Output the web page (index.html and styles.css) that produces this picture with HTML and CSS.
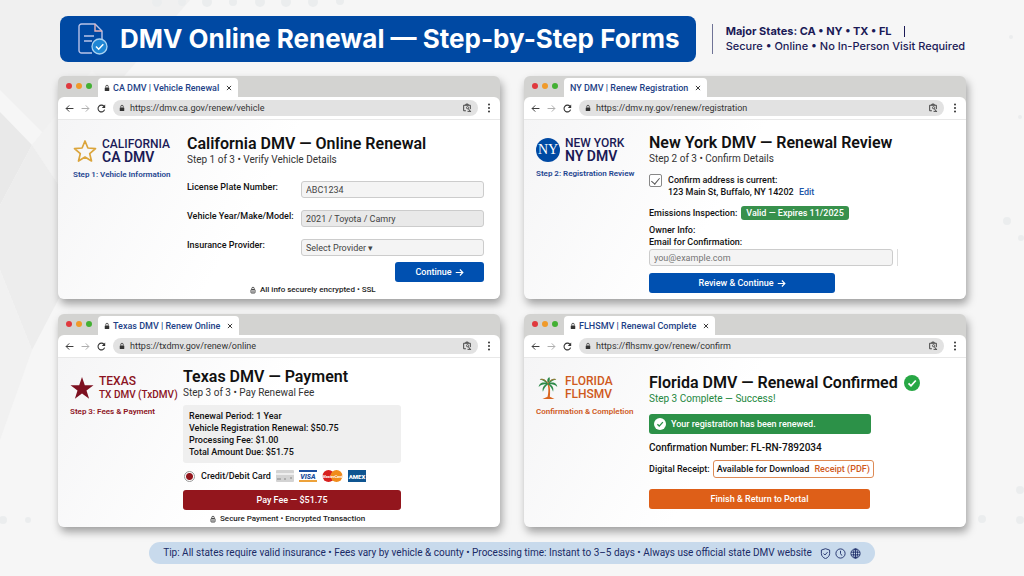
FILE: index.html
```html
<!DOCTYPE html>
<html lang="en">
<head>
    <meta charset="UTF-8">
    <meta name="viewport" content="width=device-width, initial-scale=1.0">
    <title>DMV Online Renewal</title>
    <link rel="stylesheet" href="styles.css">
</head>
<body>
    <!-- Shared icons -->
    <svg class="sprite" aria-hidden="true">
        <symbol id="lock" viewBox="0 0 12 14">
            <path d="M3.5 6V4a2.5 2.5 0 0 1 5 0v2" fill="none" stroke="currentColor" stroke-width="1.6"/>
            <rect x="1.5" y="6" width="9" height="7" rx="1" fill="currentColor"/>
        </symbol>
        <symbol id="lock-open" viewBox="0 0 12 14">
            <path d="M3.5 6V4a2.5 2.5 0 0 1 5 0v2" fill="none" stroke="currentColor" stroke-width="1.6"/>
            <rect x="2" y="6" width="8" height="7" rx="1" fill="none" stroke="currentColor" stroke-width="1.8"/>
            <path d="M4 8.5h4M4 10.5h4" stroke="currentColor"/>
        </symbol>
        <symbol id="back" viewBox="0 0 16 16">
            <path d="M15 8H2M7.5 2.500L2 8l5.500 5.500" fill="none" stroke="currentColor" stroke-width="1.7"/>
        </symbol>
        <symbol id="forward" viewBox="0 0 16 16">
            <path d="M1 8h13M8.500 2.500L14 8l-5.500 5.500" fill="none" stroke="currentColor" stroke-width="1.7"/>
        </symbol>
        <symbol id="reload" viewBox="0 0 16 16">
            <path d="M13.500 10A6 6 0 1 1 12.500 4.200" fill="none" stroke="currentColor" stroke-width="1.9"/>
            <path d="M14.500 1v6h-6z" fill="currentColor"/>
        </symbol>
        <symbol id="lens" viewBox="0 0 18 18">
            <path d="M7 14H3V4h12v7M7 4V2h4v2" fill="none" stroke="currentColor" stroke-width="1.6"/>
            <circle cx="10" cy="8.500" r="2" fill="none" stroke="currentColor" stroke-width="1.3"/>
            <path d="M11 10l5 6M10 15h5" stroke="currentColor" stroke-width="1.6"/>
        </symbol>
        <symbol id="dots" viewBox="0 0 4 14">
            <circle cx="2" cy="2" r="1.4" fill="currentColor"/>
            <circle cx="2" cy="7" r="1.4" fill="currentColor"/>
            <circle cx="2" cy="12" r="1.4" fill="currentColor"/>
        </symbol>
        <symbol id="close" viewBox="0 0 10 10">
            <path d="M1.500 1.500l7 7M8.500 1.500l-7 7" stroke="currentColor" stroke-width="1.6"/>
        </symbol>
        <symbol id="arrow" viewBox="0 0 12 12">
            <path d="M1 6h9.500M6.500 2l4 4-4 4" fill="none" stroke="currentColor" stroke-width="1.5"/>
        </symbol>
    </svg>

    <svg class="backdrop" viewBox="0 0 1024 576" preserveAspectRatio="none" aria-hidden="true">
        <path d="M0 0h190L60 150 0 90z" fill="#f0f0f0"/>
        <path d="M0 112l32 33L0 205z" fill="#e9e9e9"/>
        <path d="M32 145l60-75 60 75-60 90z" fill="#f2f2f2"/>
        <path d="M0 205l32-60 60 90-60 115L0 270z" fill="#ededed"/>
        <path d="M0 270l32 80L0 440z" fill="#f1f1f1"/>
        <g fill="#ebedee">
            <circle cx="157" cy="2" r="5"/><circle cx="182" cy="2" r="4"/><circle cx="207" cy="2" r="5"/>
            <circle cx="233" cy="2" r="4"/><circle cx="260" cy="2" r="5"/><circle cx="286" cy="2" r="5"/>
            <circle cx="313" cy="2" r="5"/><circle cx="340" cy="1" r="4"/>
            <circle cx="3" cy="520" r="4"/><circle cx="28" cy="520" r="3"/>
            <circle cx="1011" cy="37" r="2"/><circle cx="1020" cy="117" r="2"/><circle cx="1007" cy="221" r="4"/>
            <circle cx="1021" cy="238" r="3"/><circle cx="982" cy="519" r="4"/><circle cx="1020" cy="490" r="4"/>
            <circle cx="1020" cy="520" r="4"/>
        </g>
    </svg>

    <div class="page">
        <header class="header">
            <div class="banner">
                <svg class="banner-icon" viewBox="0 0 30 32" aria-hidden="true">
                    <path d="M14 30H3.500A2.500 2.500 0 0 1 1 27.500v-24A2.500 2.500 0 0 1 3.500 1H17l7 7v8" fill="none" stroke="#b9c3e8" stroke-width="1.4"/>
                    <path d="M17 1v7h7" fill="none" stroke="#e8b4b8" stroke-width="1.4"/>
                    <path d="M6 13h10M6 18h8" stroke="#b9c3e8" stroke-width="1.4"/>
                    <circle cx="21.500" cy="23.500" r="7.500" fill="#1f86d4" stroke="#a9d3f2" stroke-width="1.3"/>
                    <path d="M18 23.500l2.700 2.700 4.600-5" fill="none" stroke="#fff" stroke-width="1.500"/>
                </svg>
                <h1>DMV Online Renewal — Step-by-Step Forms</h1>
            </div>
            <div class="header-info">
                <p><strong>Major States: CA • NY • TX • FL</strong><span class="bar"></span></p>
                <p>Secure • Online • No In-Person Visit Required</p>
            </div>
        </header>

        <main class="windows">
            <section class="window window-ca">
                <div class="tabs">
                    <span class="lights"><i class="red"></i><i class="amber"></i><i class="green"></i></span>
                    <div class="tab"><svg class="lock"><use href="#lock"/></svg>CA DMV | Vehicle Renewal<svg class="close"><use href="#close"/></svg></div>
                </div>
                <div class="toolbar">
                    <svg class="nav"><use href="#back"/></svg>
                    <svg class="nav off"><use href="#forward"/></svg>
                    <svg class="nav"><use href="#reload"/></svg>
                    <div class="address"><svg class="lock"><use href="#lock"/></svg><span>https://dmv.ca.gov/renew/vehicle</span><svg class="lens"><use href="#lens"/></svg></div>
                    <svg class="menu"><use href="#dots"/></svg>
                </div>
                <div class="content">
                    <aside class="agency navy">
                        <div class="agency-name">
                            <svg class="logo" viewBox="0 0 24 24" aria-hidden="true"><path d="M12 2l2.900 7 7.600.6-5.800 5 1.800 7.400L12 18l-6.500 4 1.800-7.400-5.800-5L9.100 9z" fill="none" stroke="#dba53c" stroke-width="1.700" stroke-linejoin="round"/></svg>
                            <p><span>CALIFORNIA</span><b>CA DMV</b></p>
                        </div>
                        <p class="agency-step">Step 1: Vehicle Information</p>
                    </aside>
                    <div class="form">
                        <h2>California DMV — Online Renewal</h2>
                        <p class="sub">Step 1 of 3 • Verify Vehicle Details</p>
                        <div class="fields">
                            <label for="plate">License Plate Number:</label>
                            <input class="field" type="text" id="plate" value="ABC1234">
                            <label for="model">Vehicle Year/Make/Model:</label>
                            <input class="field filled" type="text" id="model" value="2021 / Toyota / Camry">
                            <label for="provider">Insurance Provider:</label>
                            <select class="field" id="provider"><option>Select Provider ▾</option></select>
                        </div>
                        <button class="button blue continue">Continue <svg class="arrow"><use href="#arrow"/></svg></button>
                        <p class="note"><svg class="lock"><use href="#lock-open"/></svg>All info securely encrypted • SSL</p>
                    </div>
                </div>
            </section>

            <section class="window window-ny">
                <div class="tabs">
                    <span class="lights"><i class="red"></i><i class="amber"></i><i class="green"></i></span>
                    <div class="tab">NY DMV | Renew Registration<svg class="close"><use href="#close"/></svg></div>
                </div>
                <div class="toolbar">
                    <svg class="nav"><use href="#back"/></svg>
                    <svg class="nav off"><use href="#forward"/></svg>
                    <svg class="nav"><use href="#reload"/></svg>
                    <div class="address"><svg class="lock"><use href="#lock"/></svg><span>https://dmv.ny.gov/renew/registration</span><svg class="lens"><use href="#lens"/></svg></div>
                    <svg class="menu"><use href="#dots"/></svg>
                </div>
                <div class="content">
                    <aside class="agency navy">
                        <div class="agency-name">
                            <span class="logo seal">NY</span>
                            <p><span>NEW YORK</span><b>NY DMV</b></p>
                        </div>
                        <p class="agency-step">Step 2: Registration Review</p>
                    </aside>
                    <div class="form">
                        <h2>New York DMV — Renewal Review</h2>
                        <p class="sub">Step 2 of 3 • Confirm Details</p>
                        <div class="confirm">
                            <input class="check" type="checkbox" id="address" checked>
                            <div>
                                <label for="address">Confirm address is current:</label>
                                <p>123 Main St, Buffalo, NY 14202 <a href="#">Edit</a></p>
                            </div>
                        </div>
                        <p class="inspection">Emissions Inspection: <span class="badge">Valid — Expires 11/2025</span></p>
                        <p class="owner">Owner Info:</p>
                        <label class="owner" for="email">Email for Confirmation:</label>
                        <div class="email">
                            <input class="field" type="email" id="email" placeholder="you@example.com">
                        </div>
                        <button class="button blue">Review &amp; Continue <svg class="arrow"><use href="#arrow"/></svg></button>
                    </div>
                </div>
            </section>

            <section class="window window-tx">
                <div class="tabs">
                    <span class="lights"><i class="red"></i><i class="amber"></i><i class="green"></i></span>
                    <div class="tab"><svg class="lock"><use href="#lock"/></svg>Texas DMV | Renew Online<svg class="close"><use href="#close"/></svg></div>
                </div>
                <div class="toolbar">
                    <svg class="nav"><use href="#back"/></svg>
                    <svg class="nav off"><use href="#forward"/></svg>
                    <svg class="nav"><use href="#reload"/></svg>
                    <div class="address"><svg class="lock"><use href="#lock"/></svg><span>https://txdmv.gov/renew/online</span><svg class="lens"><use href="#lens"/></svg></div>
                    <svg class="menu"><use href="#dots"/></svg>
                </div>
                <div class="content">
                    <aside class="agency maroon">
                        <div class="agency-name">
                            <svg class="logo" viewBox="0 0 24 24" aria-hidden="true"><path d="M12 1l2.800 8.200h8.700l-7 5.200 2.600 8.300L12 17.600l-7.100 5.100 2.600-8.300-7-5.200h8.700z" fill="#7d1020"/></svg>
                            <p><span>TEXAS</span><small>TX DMV (TxDMV)</small></p>
                        </div>
                        <p class="agency-step">Step 3: Fees &amp; Payment</p>
                    </aside>
                    <div class="form">
                        <h2>Texas DMV — Payment</h2>
                        <p class="sub">Step 3 of 3 • Pay Renewal Fee</p>
                        <ul class="fees">
                            <li>Renewal Period: 1 Year</li>
                            <li>Vehicle Registration Renewal: $50.75</li>
                            <li>Processing Fee: $1.00</li>
                            <li>Total Amount Due: $51.75</li>
                        </ul>
                        <div class="pay-method">
                            <input class="radio" type="radio" name="method" id="card" checked>
                            <label for="card">Credit/Debit Card</label>
                            <svg viewBox="0 0 18 12" aria-hidden="true"><rect width="18" height="12" rx="1" fill="#d3d3d3"/><path d="M0 4h18" stroke="#eee" stroke-width="2"/><path d="M1 9h4M8 9h2M15 7v2" stroke="#888"/></svg>
                            <svg viewBox="0 0 18 12" aria-hidden="true"><rect width="18" height="12" fill="#fff"/><rect width="18" height="2" fill="#1c4fa0"/><rect y="10" width="18" height="2" fill="#eda23a"/><text x="9" y="8.500" font-size="7" font-style="italic" font-weight="900" fill="#1c4fa0" text-anchor="middle">VISA</text></svg>
                            <svg class="wide" viewBox="0 0 21 12" aria-hidden="true"><circle cx="6.500" cy="6" r="6" fill="#d8201f"/><circle cx="14.500" cy="6" r="6" fill="#f08c1b"/><text x="10.500" y="7.500" font-size="4" font-style="italic" font-weight="700" fill="#fff" text-anchor="middle">MasterCard</text></svg>
                            <svg viewBox="0 0 18 12" aria-hidden="true"><rect width="18" height="12" fill="#0f5591"/><text x="9" y="8.500" font-size="6" font-weight="900" fill="#fff" text-anchor="middle">AMEX</text></svg>
                        </div>
                        <button class="button red">Pay Fee — $51.75</button>
                        <p class="note"><svg class="lock"><use href="#lock-open"/></svg>Secure Payment • Encrypted Transaction</p>
                    </div>
                </div>
            </section>

            <section class="window window-fl">
                <div class="tabs">
                    <span class="lights"><i class="red"></i><i class="amber"></i><i class="green"></i></span>
                    <div class="tab"><svg class="lock"><use href="#lock"/></svg>FLHSMV | Renewal Complete<svg class="close"><use href="#close"/></svg></div>
                </div>
                <div class="toolbar">
                    <svg class="nav"><use href="#back"/></svg>
                    <svg class="nav off"><use href="#forward"/></svg>
                    <svg class="nav"><use href="#reload"/></svg>
                    <div class="address"><svg class="lock"><use href="#lock"/></svg><span>https://flhsmv.gov/renew/confirm</span><svg class="lens"><use href="#lens"/></svg></div>
                    <svg class="menu"><use href="#dots"/></svg>
                </div>
                <div class="content">
                    <aside class="agency rust">
                        <div class="agency-name">
                            <svg class="logo" viewBox="0 0 24 26" aria-hidden="true">
                                <path d="M11 8c2 4 1.500 10 .5 14.500L6 25h13l-5-2.500c.5-5 .5-10-1-14.500z" fill="#d9651f"/>
                                <path d="M12 8C9 3 5 2 3 4c3 0 5 1.500 7 3.500C6 6 2 8 2 12c2-2.500 5-3.500 8-3-3 1.500-4.500 4.500-3.500 8 1-3.500 3-6 5.500-8 2.500 2 4.500 4.500 5.500 8 1-3.500-.5-6.500-3.500-8 3-.5 6 .5 8 3 0-4-4-6-8-4.500C16 5.500 18 4 21 4c-2-2-6-1-9 4z" fill="#2d8a4a"/>
                                <path d="M12 8c-1.500-3-1-5.500 1.500-7 1 2.500.5 5-1.500 7z" fill="#2d8a4a"/>
                                <path d="M4 3.500c4 0 6 1.500 8 4.500M20 3.500c-4 0-6 1.500-8 4.500" fill="none" stroke="#c9702c" stroke-width=".8"/>
                            </svg>
                            <p><span>FLORIDA</span><span>FLHSMV</span></p>
                        </div>
                        <p class="agency-step">Confirmation &amp; Completion</p>
                    </aside>
                    <div class="form">
                        <h2>Florida DMV — Renewal Confirmed <svg class="done" viewBox="0 0 16 16"><circle cx="8" cy="8" r="8" fill="#27a745"/><path d="M4.500 8.300l2.500 2.500 4.800-5.300" fill="none" stroke="#fff" stroke-width="1.800"/></svg></h2>
                        <p class="sub success">Step 3 Complete — Success!</p>
                        <p class="alert"><svg viewBox="0 0 16 16"><circle cx="8" cy="8" r="8" fill="#fff"/><path d="M4.500 8.300l2.500 2.500 4.800-5.300" fill="none" stroke="#2c9148" stroke-width="1.800"/></svg>Your registration has been renewed.</p>
                        <p class="number">Confirmation Number: FL-RN-7892034</p>
                        <div class="receipt">Digital Receipt: <span class="download">Available for Download <a href="#">Receipt (PDF)</a></span></div>
                        <button class="button orange">Finish &amp; Return to Portal</button>
                    </div>
                </div>
            </section>
        </main>

        <footer class="tip">
            <p>Tip: All states require valid insurance • Fees vary by vehicle &amp; county • Processing time: Instant to 3–5 days • Always use official state DMV website</p>
            <svg viewBox="0 0 16 16" aria-hidden="true"><path d="M8 1l6 2v5c0 3.500-2.500 6-6 7.500C4.500 14 2 11.500 2 8V3z"/><path d="M5 8l2.200 2.200L11 6"/></svg>
            <svg viewBox="0 0 16 16" aria-hidden="true"><circle cx="8" cy="8" r="6.700"/><path d="M8 4v4l2 3"/></svg>
            <svg viewBox="0 0 16 16" aria-hidden="true"><circle cx="8" cy="8" r="6.700"/><ellipse cx="8" cy="8" rx="3" ry="6.700"/><path d="M1.500 6h13M1.500 10h13M8 1.500v13"/></svg>
        </footer>
    </div>
</body>
</html>
```

FILE: styles.css
```css
* {
    box-sizing: border-box;
}

body {
    margin: 0;
    min-height: 100vh;
    font-family: Roboto, "Liberation Sans", sans-serif;
    font-size: 10px;
    line-height: 12px;
    color: #111;
    background-color: #f6f6f6;
}

h1,
h2,
p,
ul {
    margin: 0;
    padding: 0;
}

svg {
    display: block;
    flex: none;
}

a {
    text-decoration: none;
}

.sprite {
    position: absolute;
    width: 0;
    height: 0;
}

.backdrop {
    position: absolute;
    top: 0;
    left: 0;
    z-index: -1;
    width: 100%;
    height: 100%;
}

.page {
    padding: 16px 58px 12px;
}

/* Header */
.header {
    display: flex;
    align-items: center;
    gap: 16px;
    padding-left: 2px;
    margin-bottom: 14px;
}

.banner {
    display: flex;
    align-items: center;
    gap: 12px;
    height: 46px;
    padding: 0 16px 0 18px;
    border-radius: 8px;
    background-color: #0049a3;
    color: #fff;
}

.banner-icon {
    width: 30px;
    height: 32px;
}

h1 {
    font-family: Inter, sans-serif;
    font-size: 26px;
    line-height: 32px;
    font-weight: 700;
    white-space: nowrap;
}

.header-info {
    padding-left: 13px;
    border-left: 1px solid #6f7396;
    font-family: Inter, sans-serif;
    font-size: 11px;
    line-height: 15px;
    font-weight: 500;
    color: #1b1a56;
    white-space: nowrap;
}

.header-info p {
    display: flex;
    align-items: center;
}

.bar {
    width: 1px;
    height: 11px;
    margin-left: 12px;
    background-color: #1b1a56;
}

/* Browser windows */
.windows {
    display: grid;
    grid-template-columns: 1fr 1fr;
    gap: 15px 24px;
}

.window {
    display: flex;
    flex-direction: column;
    border-radius: 6px;
    background-color: #d3d3d1;
    box-shadow: 2px 5px 8px rgba(0, 0, 0, 0.35);
}

.tabs {
    display: flex;
    align-items: flex-end;
    gap: 6px;
    height: 21px;
    padding-left: 8px;
}

.lights {
    display: flex;
    gap: 4px;
    padding-bottom: 8px;
}

.lights i {
    width: 6px;
    height: 6px;
    border-radius: 50%;
}

.red {
    background-color: #e0393e;
}

.amber {
    background-color: #f09a2a;
}

.green {
    background-color: #43b033;
}

.tab {
    display: flex;
    align-items: center;
    gap: 3px;
    height: 19px;
    padding: 0 6px;
    border-radius: 4px 4px 0 0;
    background-color: #fff;
    font-size: 9px;
    font-weight: 500;
    color: #1d3f86;
}

.lock {
    width: 6px;
    height: 8px;
    color: #333;
}

.close {
    width: 6px;
    height: 6px;
    margin-left: 4px;
    color: #333;
}

.toolbar {
    display: flex;
    align-items: center;
    height: 23px;
    padding: 0 9px 0 7px;
    border-bottom: 1px solid #e8e8e8;
    border-radius: 6px 6px 0 0;
    background-color: #fff;
    color: #333;
}

.nav {
    width: 9px;
    height: 9px;
    margin-right: 7px;
}

.nav.off {
    color: #aaa;
}

.address {
    display: flex;
    flex: 1;
    align-items: center;
    gap: 5px;
    height: 16px;
    padding: 0 6px;
    border-radius: 8px;
    background-color: #e2e2e2;
}

.address span {
    flex: 1;
    font-size: 9px;
}

.lens {
    width: 10px;
    height: 10px;
}

.menu {
    width: 4px;
    height: 10px;
    margin-left: 9px;
}

/* Window content */
.content {
    display: grid;
    flex: 1;
    grid-template-columns: 113px 1fr;
    padding: 14px 16px 0 12px;
    border-radius: 0 0 6px 6px;
    background: linear-gradient(120deg, #f5f5f6 0%, #fff 45%);
}

.agency {
    padding-top: 3px;
}

.agency-name {
    display: flex;
    align-items: center;
    gap: 5px;
    font-size: 12px;
    font-weight: 500;
    line-height: 13px;
    white-space: nowrap;
}

.agency-name span,
.agency-name b,
.agency-name small {
    display: block;
}

.agency-name b {
    font-size: 14px;
    font-weight: 600;
}

.agency-name small {
    font-size: 10px;
}

.agency-name .logo {
    width: 24px;
    height: 24px;
}

.agency-name .seal {
    border-radius: 50%;
    background-color: #0049a3;
    color: #fff;
    font-family: "Liberation Serif", serif;
    font-size: 14px;
    line-height: 24px;
    text-align: center;
}

.agency-step {
    margin-top: 5px;
    font-size: 8px;
    font-weight: 600;
    white-space: nowrap;
}

.navy {
    color: #1b1a56;
}

.navy .agency-step {
    color: #1d4590;
}

.maroon {
    color: #8c1322;
}

.rust {
    color: #cf5a1c;
}

.form {
    font-weight: 500;
}

h2 {
    display: flex;
    align-items: center;
    gap: 6px;
    font-size: 16px;
    line-height: 18px;
    font-weight: 600;
    white-space: nowrap;
}

.sub {
    font-size: 10px;
    line-height: 14px;
    font-weight: 400;
    color: #333;
}

.success {
    color: #23873d;
}

.field {
    width: 100%;
    height: 17px;
    padding: 0 4px;
    border: 1px solid #ccc;
    border-radius: 3px;
    background-color: #f4f4f4;
    font-family: inherit;
    font-size: 9px;
    color: #444;
    appearance: none;
}

.filled {
    background-color: #e9e9e9;
}

.button {
    display: flex;
    align-items: center;
    justify-content: center;
    gap: 3px;
    height: 20px;
    padding: 0;
    border: none;
    border-radius: 3px;
    font-family: inherit;
    font-size: 9px;
    font-weight: 500;
    color: #fff;
    cursor: pointer;
}

.button.blue {
    background-color: #0050b0;
}

.button.red {
    background-color: #93161d;
}

.button.orange {
    background-color: #de5f18;
}

.arrow {
    width: 9px;
    height: 9px;
}

.note {
    display: flex;
    align-items: center;
    gap: 4px;
    font-size: 8px;
    font-weight: 500;
    color: #222;
}

/* California */
.window-ca .content {
    grid-template-columns: 114px 1fr;
    padding: 15px 16px 3px 15px;
}

.fields {
    display: grid;
    grid-template-columns: 114px 1fr;
    gap: 12px 0;
    margin-top: 14px;
    font-size: 9px;
}

.continue {
    width: 89px;
    margin: 6px 0 2px auto;
}

.window-ca .note {
    padding-left: 63px;
}

/* New York */
.confirm {
    display: flex;
    gap: 6px;
    margin-top: 8px;
}

.check {
    width: 13px;
    height: 13px;
    margin: 0;
    border: 1px solid #888;
    border-radius: 2px;
    background-color: #fff;
    appearance: none;
}

.check:checked::after {
    content: "";
    display: block;
    width: 4px;
    height: 7px;
    margin: 1px auto;
    border: solid #555;
    border-width: 0 1px 1px 0;
    transform: rotate(40deg);
}

.window-ny .form {
    font-size: 9px;
}

.confirm a {
    margin-left: 3px;
    color: #1d56a8;
}

.inspection {
    display: flex;
    align-items: center;
    gap: 4px;
    margin: 8px 0 4px;
}

.badge {
    padding: 1px 5px;
    border-radius: 3px;
    background-color: #38914c;
    color: #fff;
}

.owner {
    display: block;
}

.email {
    width: 249px;
    padding-right: 4px;
    border-right: 1px solid #ddd;
    margin: 1px 0 7px;
}

.window-ny .button {
    width: 186px;
}

/* Texas */
.window-tx .content {
    padding: 10px 16px 2px 12px;
}

.window-tx .agency {
    padding-top: 7px;
}

.fees {
    width: 218px;
    margin: 5px 0 7px;
    padding: 5px 6px;
    border-radius: 3px;
    background-color: #efefef;
    font-size: 9px;
    list-style: none;
}

.pay-method {
    display: flex;
    align-items: center;
    gap: 5px;
    margin-bottom: 8px;
    font-size: 9px;
}

.pay-method svg {
    width: 18px;
    height: 12px;
    font-family: Roboto, sans-serif;
}

.pay-method .wide {
    width: 21px;
}

.radio {
    width: 11px;
    height: 11px;
    margin: 0 1px;
    border: 1px solid #999;
    border-radius: 50%;
    background: radial-gradient(circle, #93161d 3px, #fff 4px);
    appearance: none;
}

.window-tx .button {
    width: 218px;
}

.window-tx .note {
    margin-top: 3px;
    padding-left: 27px;
}

/* Florida */
.done {
    width: 16px;
    height: 16px;
}

.window-fl .form {
    padding-top: 2px;
}

.alert {
    display: flex;
    align-items: center;
    gap: 5px;
    width: 222px;
    height: 20px;
    margin: 8px 0;
    padding: 0 5px;
    border-radius: 3px;
    background-color: #2c9148;
    font-size: 9px;
    color: #fff;
}

.alert svg {
    width: 12px;
    height: 12px;
}

.receipt {
    display: flex;
    align-items: center;
    gap: 3px;
    margin: 6px 0 11px;
    font-size: 9px;
    white-space: nowrap;
}

.download {
    padding: 2px 3px;
    border: 1px solid #dd8a55;
    border-radius: 3px;
}

.download a {
    margin-left: 3px;
    color: #cf5a1c;
}

.window-fl .button {
    width: 221px;
}

/* Footer tip */
.tip {
    display: flex;
    align-items: center;
    gap: 4px;
    width: fit-content;
    height: 22px;
    margin: 15px auto 0;
    padding: 0 14px;
    border-radius: 11px;
    background-color: #c8daec;
    color: #1a2a66;
    font-weight: 400;
    white-space: nowrap;
}

.tip p {
    margin-right: 4px;
}

.tip svg {
    width: 11px;
    height: 11px;
    fill: none;
    stroke: currentColor;
    stroke-width: 1.3;
}
```
